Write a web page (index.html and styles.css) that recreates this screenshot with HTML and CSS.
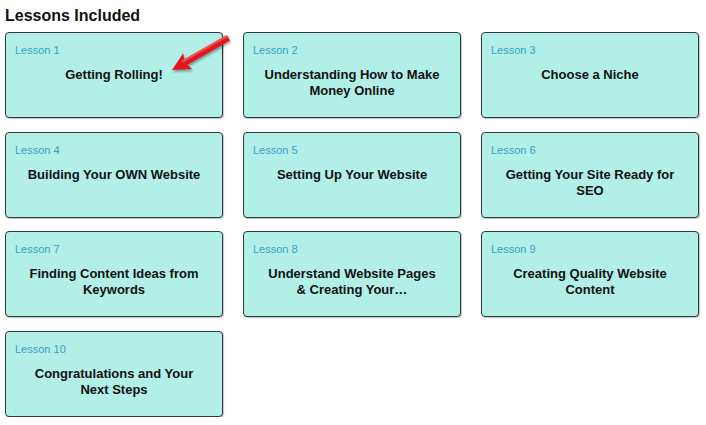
FILE: index.html
```html
<!DOCTYPE html>
<html lang="en">
<head>
    <meta charset="UTF-8">
    <meta name="viewport" content="width=device-width, initial-scale=1.0">
    <title>Lessons Included</title>
    <link rel="stylesheet" href="styles.css">
</head>
<body>
    <div class="page">
        <h2 class="titulo">Lessons Included</h2>

        <div class="grade">
            <div class="card">
                <div class="numero">Lesson 1</div>
                <div class="nome">Getting Rolling!</div>
                <svg class="seta" width="66" height="42" viewBox="0 0 66 42">
                    <g transform="translate(6,37) rotate(-29.7)">
                        <rect x="13" y="-3.2" width="52" height="6.4" fill="#e3171b"/>
                        <polygon points="0,0 18,-9 15,0 18,9" fill="#e3171b"/>
                        <rect x="13" y="-3.2" width="52" height="2" fill="#f0544f"/>
                    </g>
                </svg>
            </div>
            <div class="card">
                <div class="numero">Lesson 2</div>
                <div class="nome">Understanding How to Make Money Online</div>
            </div>
            <div class="card">
                <div class="numero">Lesson 3</div>
                <div class="nome">Choose a Niche</div>
            </div>
            <div class="card">
                <div class="numero">Lesson 4</div>
                <div class="nome">Building Your OWN Website</div>
            </div>
            <div class="card">
                <div class="numero">Lesson 5</div>
                <div class="nome">Setting Up Your Website</div>
            </div>
            <div class="card">
                <div class="numero">Lesson 6</div>
                <div class="nome">Getting Your Site Ready for SEO</div>
            </div>
            <div class="card">
                <div class="numero">Lesson 7</div>
                <div class="nome">Finding Content Ideas from Keywords</div>
            </div>
            <div class="card">
                <div class="numero">Lesson 8</div>
                <div class="nome">Understand Website Pages &amp; Creating Your…</div>
            </div>
            <div class="card">
                <div class="numero">Lesson 9</div>
                <div class="nome">Creating Quality Website Content</div>
            </div>
            <div class="card">
                <div class="numero">Lesson 10</div>
                <div class="nome">Congratulations and Your Next Steps</div>
            </div>
        </div>
    </div>
</body>
</html>
```

FILE: styles.css
```css
body {
    font-family: "Liberation Sans", Arial, sans-serif;
    background-color: #fff;
    margin: 0;
    padding: 0;
}

.page {
    padding: 0 5px;
}

.titulo {
    font-size: 16px;
    line-height: 19px;
    font-weight: bold;
    color: #111;
    margin: 6px 0 7px;
}

.grade {
    display: grid;
    grid-template-columns: repeat(3, 218px);
    grid-auto-rows: 86px;
    column-gap: 20px;
    row-gap: 13.5px;
}

.card {
    position: relative;
    box-sizing: border-box;
    background-color: #b1efe7;
    border: 1px solid #2d3c3c;
    border-radius: 4px;
    box-shadow: 1px 1px 1px rgba(0, 0, 0, 0.25);
    padding: 10px 9px;
}

.numero {
    font-size: 11px;
    line-height: 14px;
    color: #3ba0c9;
}

.nome {
    margin: 10px 11px 0;
    font-size: 13px;
    line-height: 16px;
    font-weight: bold;
    color: #111;
    text-align: center;
}

.seta {
    position: absolute;
    left: 160px;
    top: 0px;
    overflow: visible;
    filter: drop-shadow(1px 2px 1px rgba(0, 0, 0, 0.35));
}
```
